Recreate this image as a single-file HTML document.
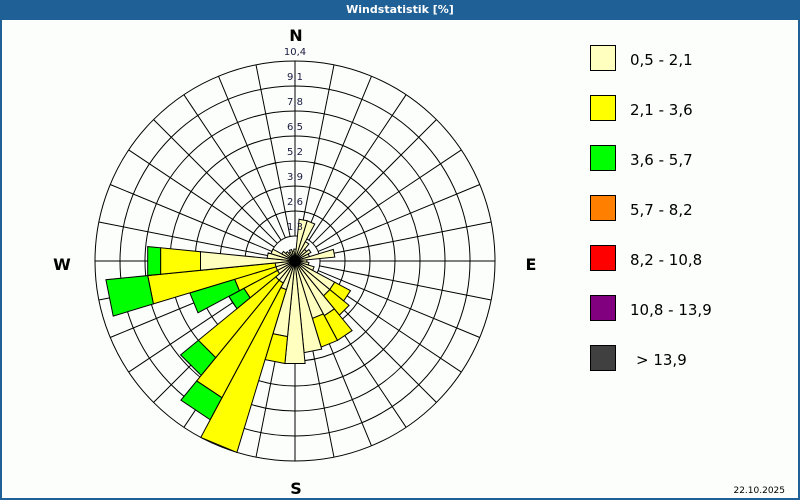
<!DOCTYPE html>
<html><head><meta charset="utf-8"><style>
body{margin:0;width:800px;height:500px;overflow:hidden;font-family:"DejaVu Sans","Liberation Sans",sans-serif;}
#w{position:absolute;left:0;top:0;width:796px;height:478px;border:2px solid #1f6096;border-top:none;background:#fbfefb;top:20px}
#h{position:absolute;left:0;top:0;width:800px;height:20px;background:#1f6096;color:#fff;font-size:11px;font-weight:bold;text-align:center;line-height:19px}
</style></head><body>
<div id="h">Windstatistik [%]</div>
<div id="w"></div>
<svg id="s" width="800" height="500" style="position:absolute;left:0;top:0" font-family="DejaVu Sans, Liberation Sans, sans-serif"></svg>
<script>
var s=document.getElementById('s'),cx=295,cy=261,h='';
function P(r,a){a=a*Math.PI/180;return [(cx+r*Math.sin(a)).toFixed(1),(cy-r*Math.cos(a)).toFixed(1)];}
for(var k=1;k<=8;k++)h+='<circle cx="'+cx+'" cy="'+cy+'" r="'+(k*25)+'" fill="none" stroke="#000" stroke-width="1"/>';
for(var i=0;i<32;i++){var a=P(25,i*11.25),b=P(200,i*11.25);h+='<line x1="'+a[0]+'" y1="'+a[1]+'" x2="'+b[0]+'" y2="'+b[1]+'" stroke="#000"/>';}
var C=['#ffffc0','#ffff00','#00ff00'];
var bars={0:[12],1:[42],2:[42],3:[22],4:[15],5:[18],6:[15],7:[40],8:[12],9:[14],10:[20],11:[45,63],12:[45,70],13:[62,90],14:[60,90],15:[92],16:[103],17:[76,103],18:[30,200],19:[25,155,180],20:[25,125,148],21:[20,58,75],22:[20,63,110],23:[20,148,190],24:[95,135,148],25:[28],26:[25],27:[15],28:[12],29:[10],30:[12],31:[10]};
for(var d in bars){var r0=0,arr=bars[d];for(var j=0;j<arr.length;j++){var r1=arr[j],A=d*11.25,p1=P(r0,A-5.6),p2=P(r1,A-5.6),p3=P(r1,A+5.6),p4=P(r0,A+5.6);
h+='<polygon points="'+p1+' '+p2+' '+p3+' '+p4+'" fill="'+C[j]+'" stroke="#000" stroke-width="1"/>';r0=r1;}}
h+='<circle cx="'+cx+'" cy="'+cy+'" r="5" fill="#000"/>';
var L=['1,3','2,6','3,9','5,2','6,5','7,8','9,1','10,4'];
for(var k=0;k<8;k++)h+='<text x="'+cx+'" y="'+(cy-(k+1)*25-6)+'" font-size="10" text-anchor="middle" fill="#1a1a40">'+L[k]+'</text>';
h+='<g font-size="16" font-weight="bold" text-anchor="middle"><text x="296" y="41">N</text><text x="62" y="270">W</text><text x="531" y="270">E</text><text x="296" y="494">S</text></g>';
var LC=['#ffffc0','#ffff00','#00ff00','#ff8000','#ff0000','#800080','#404040'],LT=['0,5 - 2,1','2,1 - 3,6','3,6 - 5,7','5,7 - 8,2','8,2 - 10,8','10,8 - 13,9','&gt; 13,9'];
for(var k=0;k<7;k++){h+='<rect x="590.5" y="'+(45.5+k*50)+'" width="25" height="25" fill="'+LC[k]+'" stroke="#000"/>';h+='<text x="'+(k==6?636:630)+'" y="'+(65+k*50)+'" font-size="15" fill="#000">'+LT[k]+'</text>';}
h+='<text x="785" y="493" font-size="9" text-anchor="end">22.10.2025</text>';
s.innerHTML=h;
</script>
</body></html>
